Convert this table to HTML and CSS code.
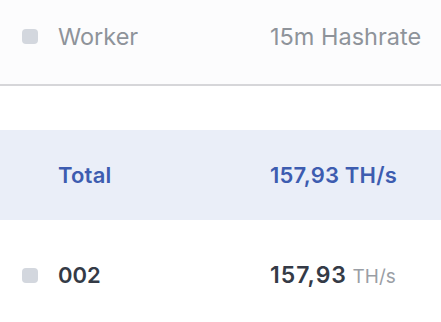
FILE: index.html
```html
<!DOCTYPE html>
<html>
<head>
<meta charset="utf-8">
<link rel="stylesheet" href="styles.css">
</head>
<body>
<div class="table">
  <div class="row head">
    <span class="check"></span>
    <span class="name">Worker</span>
    <span class="value">15m Hashrate</span>
  </div>
  <div class="spacer"></div>
  <div class="row total">
    <span class="check none"></span>
    <span class="name">Total</span>
    <span class="value">157,93 TH/s</span>
  </div>
  <div class="row worker">
    <span class="check"></span>
    <span class="name">002</span>
    <span class="value"><span class="num">157,93</span> <span class="unit">TH/s</span></span>
  </div>
</div>
</body>
</html>
```
FILE: styles.css
```css
html, body {
  margin: 0;
  padding: 0;
  background: #ffffff;
}
body {
  font-family: "Inter", "Liberation Sans", sans-serif;
  width: 441px;
  height: 322px;
  overflow: hidden;
}
.table {
  display: flex;
  flex-direction: column;
}
.row {
  display: grid;
  grid-template-columns: 16px 192px 1fr;
  column-gap: 20px;
  align-items: center;
  padding-left: 22px;
  white-space: nowrap;
  box-sizing: border-box;
}
.check {
  width: 16px;
  height: 15px;
  border-radius: 4px;
  background: #d3d7de;
}
.check.none {
  background: transparent;
}
.head {
  height: 86px;
  padding-bottom: 12px;
  border-bottom: 2px solid #d6d6d9;
  background: #fcfcfd;
  color: #8e939a;
  font-size: 23.5px;
  font-weight: 400;
}
.head .check { margin-top: 1px; }
.spacer {
  height: 44px;
}
.total {
  height: 90px;
  background: #eaeef8;
  color: #3d5cb0;
  font-size: 22px;
  font-weight: 600;
  letter-spacing: 0.2px;
}
.worker {
  height: 102px;
  padding-top: 8px;
  color: #343a46;
  font-size: 22px;
  font-weight: 600;
}
.num {
  font-size: 23px;
  letter-spacing: 1px;
}
.unit {
  font-size: 19px;
  font-weight: 400;
  color: #9a9ea5;
}
```
